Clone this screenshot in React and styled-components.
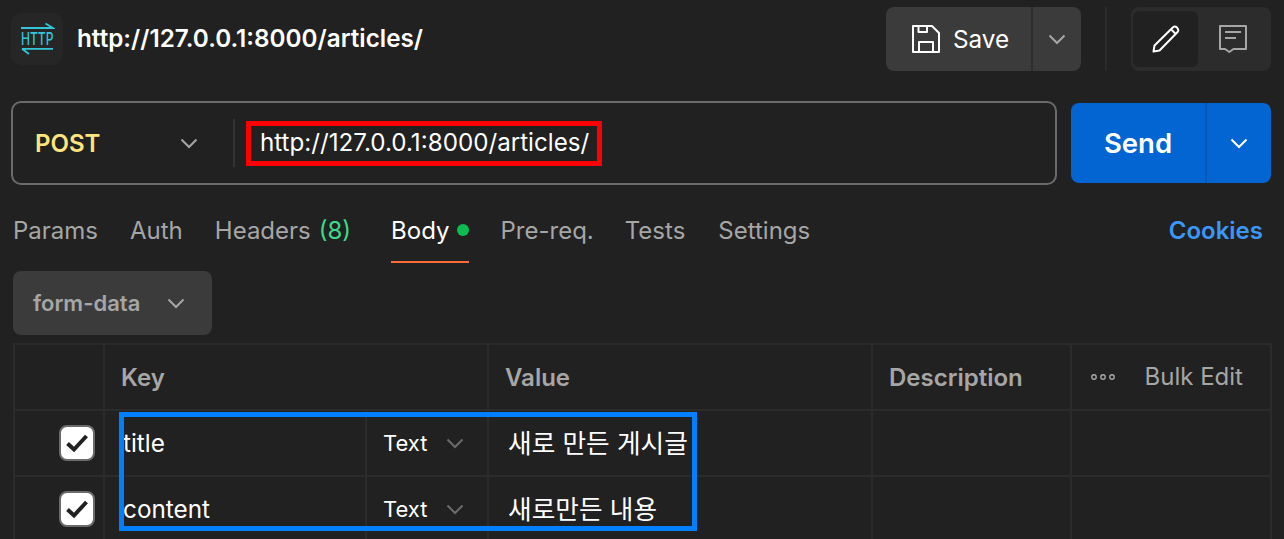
import React from "react";
import styled, { createGlobalStyle } from "styled-components";

const Global = createGlobalStyle`
  html, body { margin: 0; padding: 0; background: #212121; overflow: hidden; }
  body { width: 1284px; height: 539px; font-family: Inter, "Noto Sans CJK KR", sans-serif; color: #fff; }
  * { box-sizing: border-box; }
`;

const Page = styled.div`
  width: 1284px;
  height: 539px;
  overflow: hidden;
  background: #212121;
  padding: 7px 13px 0 11px;
`;

const Header = styled.header`
  display: flex;
  align-items: center;
  height: 64px;
`;

const Logo = styled.div`
  width: 52px;
  height: 52px;
  border-radius: 10px;
  background: #262626;
  display: flex;
  align-items: center;
  justify-content: center;
  margin-right: 14px;
`;

const Title = styled.h1`
  flex: 1;
  margin: 0 0 2px;
  font-size: 24.25px;
  font-weight: 600;
  color: #fff;
`;

const SplitButton = styled.div`
  display: flex;
  height: 64px;
  width: 195px;
  border-radius: 8px;
  overflow: hidden;
  background: #3b3b3b;
`;

const SaveMain = styled.div`
  width: 145px;
  display: flex;
  align-items: center;
  justify-content: center;
  gap: 13px;
  padding: 0 0 1px 4px;
  font-size: 24.3px;
  color: #fff;
`;

const SplitDivider = styled.div`
  width: 2px;
  background: ${(p) => p.$color};
`;

const CaretCell = styled.div`
  flex: 1;
  display: flex;
  align-items: center;
  justify-content: center;
`;

const HeaderDivider = styled.div`
  width: 2px;
  height: 64px;
  background: #2b2b2b;
  margin: 0 24px;
`;

const Toggle = styled.div`
  width: 140px;
  height: 64px;
  border-radius: 8px;
  background: #2c2c2c;
  display: flex;
  align-items: center;
  padding: 4px 2px;
`;

const ToggleItem = styled.div`
  width: ${(p) => (p.$active ? "65px" : "70px")};
  height: 56px;
  border-radius: 6px;
  display: flex;
  align-items: center;
  justify-content: center;
  background: ${(p) => (p.$active ? "#212121" : "transparent")};
`;

const RequestRow = styled.div`
  display: flex;
  align-items: center;
  gap: 14px;
  margin-top: 30px;
`;

const UrlBox = styled.div`
  width: 1046px;
  height: 84px;
  border: 2px solid #6b6b6b;
  border-radius: 10px;
  display: flex;
  align-items: center;
`;

const Method = styled.div`
  width: 220px;
  display: flex;
  align-items: center;
  justify-content: space-between;
  padding: 0 34px 0 22px;
  font-size: 24px;
  font-weight: 600;
  color: #ffe47e;
`;

const MethodDivider = styled.div`
  width: 2px;
  height: 48px;
  background: #333;
`;

const UrlHighlight = styled.div`
  margin-left: 11px;
  width: 356px;
  height: 45px;
  border: 5px solid #ff0000;
  display: flex;
  align-items: center;
  padding: 0 0 2px 9px;
  font-size: 24.2px;
  color: #fff;
`;

const SendButton = styled.div`
  width: 200px;
  height: 80px;
  border-radius: 8px;
  background: #0265d2;
  display: flex;
  overflow: hidden;
`;

const SendMain = styled.div`
  width: 134px;
  display: flex;
  align-items: center;
  justify-content: center;
  font-size: 27.5px;
  font-weight: 600;
  color: #fff;
`;

const Tabs = styled.nav`
  display: flex;
  height: 78px;
  margin-left: 2px;
  padding-right: 8px;
`;

const Tab = styled.div`
  height: 78px;
  margin-right: ${(p) => p.$gap}px;
  padding-top: 14px;
  display: flex;
  align-items: center;
  gap: ${(p) => (p.$active ? 7 : 8)}px;
  font-size: 24px;
  color: ${(p) => (p.$active ? "#fff" : "#a6a6a6")};
  border-bottom: 2px solid ${(p) => (p.$active ? "#ff6c37" : "transparent")};
`;

const Count = styled.span`
  color: #3fd98a;
`;

const Dot = styled.span`
  width: 12px;
  height: 12px;
  border-radius: 50%;
  background: #0cbb52;
`;

const Cookies = styled.div`
  margin-left: auto;
  padding-top: 14px;
  height: 76px;
  display: flex;
  align-items: center;
  font-size: 24px;
  font-weight: 600;
  color: #3b97f5;
`;

const FormSelect = styled.div`
  margin: 8px 0 0 2px;
  width: 199px;
  height: 64px;
  border-radius: 8px;
  background: #3b3b3b;
  display: flex;
  align-items: center;
  gap: 26px;
  padding-left: 20px;
  font-size: 22px;
  font-weight: 600;
  color: #a6a6a6;
`;

const Table = styled.div`
  position: relative;
  margin: 8px 0 0 2px;
  width: 1259px;
  border-left: 2px solid #2b2b2b;
  border-top: 2px solid #2b2b2b;
  display: grid;
  grid-template-columns: 90px 262px 122px 384px 199px 200px;
  grid-auto-rows: 66px;
`;

const Cell = styled.div`
  grid-column: span ${(p) => p.$span || 1};
  border-right: 2px solid #2b2b2b;
  border-bottom: 2px solid #2b2b2b;
  display: flex;
  align-items: center;
  justify-content: ${(p) => (p.$center ? "flex-end" : "flex-start")};
  padding-left: ${(p) => p.$pl ?? 16}px;
  padding-right: ${(p) => p.$pr ?? 0}px;
  font-size: 24px;
  color: #fff;
`;

const HeadLabel = styled.span`
  font-weight: 600;
  color: #a6a6a6;
`;

const BulkEdit = styled.span`
  color: #a6a6a6;
  margin: 0 0 2px 28.5px;
`;

const Check = styled.div`
  width: 36px;
  height: 36px;
  border: 2px solid #6b6b6b;
  border-radius: 8px;
  background: #fff;
  display: flex;
  align-items: center;
  justify-content: center;
`;

const KeyText = styled.span`
  font-size: 24.3px;
  margin-bottom: 1px;
`;

const ValueText = styled.span`
  font-size: 25.7px;
  margin-bottom: 4px;
`;

const TypeCell = styled.div`
  display: flex;
  align-items: center;
  justify-content: space-between;
  width: 82px;
  font-size: 22px;
`;

const Annotation = styled.div`
  position: absolute;
  left: 104px;
  top: 67px;
  width: 578px;
  height: 119px;
  border: 5px solid #0080ff;
  pointer-events: none;
`;

const Caret = ({ color = "#a6a6a6", size = 20 }) => (
  <svg width={size} height={size} viewBox="0 0 20 20" fill="none">
    <path d="M2.5 6.5 L10 14 L17.5 6.5" stroke={color} strokeWidth="2" />
  </svg>
);

const HttpIcon = () => (
  <svg width="36" height="34" viewBox="-1 0 36 34" fill="none">
    <path d="M1 6 H33 L25.5 1.5 M2 26.8 H33 M2 26.8 L9 32" stroke="#35c5d8" strokeWidth="1.8" />
    <text transform="translate(1 22.8) scale(0.71 1)" fontFamily="Inter, sans-serif" fontSize="17" fontWeight="500" fill="#35c5d8">HTTP</text>
  </svg>
);

const SaveIcon = () => (
  <svg width="28" height="28" viewBox="0 0 28 28" fill="none" stroke="#fff" strokeWidth="2" strokeLinejoin="round">
    <path d="M1 1 H20 L27 8 V27 H1 Z" />
    <path d="M6.5 1 V7 H15 V1" />
    <path d="M7 27 V17 H21 V27" />
  </svg>
);

const PencilIcon = () => (
  <svg width="28" height="28" viewBox="0 0 28 28" fill="none" stroke="#fff" strokeWidth="2" strokeLinejoin="round">
    <path d="M1.5 26.5 L2.5 20.5 L21 2.2 Q23 0.8 25 2.6 Q27.2 5 25.6 7 L7.5 25.5 Z" />
    <path d="M19 4.2 L24 9.2" />
  </svg>
);

const CommentIcon = () => (
  <svg width="28" height="28" viewBox="0 0 28 28" fill="none" stroke="#a6a6a6" strokeWidth="2" strokeLinejoin="round">
    <path d="M1 1 H27 V24 H14.5 L10.3 27 L6 24 H1 Z" />
    <path d="M6 7 H22 M6 13 H17" />
  </svg>
);

const CheckMark = () => (
  <svg width="24" height="20" viewBox="0 0 24 20" fill="none">
    <path d="M2.5 10.5 L9 16.5 L21.5 3" stroke="#212121" strokeWidth="4" />
  </svg>
);

const Dots = () => (
  <svg width="26" height="8" viewBox="0 0 26 8" fill="none" stroke="#a6a6a6" strokeWidth="1.4">
    <circle cx="4" cy="4" r="2.2" />
    <circle cx="13" cy="4" r="2.2" />
    <circle cx="22" cy="4" r="2.2" />
  </svg>
);

const rows = [
  { key: "title", value: "새로 만든 게시글" },
  { key: "content", value: "새로만든 내용" },
];

const tabs = [
  { label: "Params", gap: 32 },
  { label: "Auth", gap: 32 },
  { label: "Headers", count: "(8)", gap: 40 },
  { label: "Body", active: true, dot: true, gap: 32 },
  { label: "Pre-req.", gap: 31 },
  { label: "Tests", gap: 33 },
  { label: "Settings", gap: 0 },
];

export default function App() {
  return (
    <Page>
      <Global />
      <Header>
        <Logo><HttpIcon /></Logo>
        <Title>http://127.0.0.1:8000/articles/</Title>
        <SplitButton>
          <SaveMain><SaveIcon />Save</SaveMain>
          <SplitDivider $color="#2e2e2e" />
          <CaretCell><Caret /></CaretCell>
        </SplitButton>
        <HeaderDivider />
        <Toggle>
          <ToggleItem $active><PencilIcon /></ToggleItem>
          <ToggleItem><CommentIcon /></ToggleItem>
        </Toggle>
      </Header>

      <RequestRow>
        <UrlBox>
          <Method>POST<Caret /></Method>
          <MethodDivider />
          <UrlHighlight>http://127.0.0.1:8000/articles/</UrlHighlight>
        </UrlBox>
        <SendButton>
          <SendMain>Send</SendMain>
          <SplitDivider $color="#0357b3" />
          <CaretCell><Caret color="#fff" /></CaretCell>
        </SendButton>
      </RequestRow>

      <Tabs>
        {tabs.map((t) => (
          <Tab key={t.label} $active={t.active} $gap={t.gap}>
            {t.label}
            {t.count && <Count>{t.count}</Count>}
            {t.dot && <Dot />}
          </Tab>
        ))}
        <Cookies>Cookies</Cookies>
      </Tabs>

      <FormSelect>form-data<Caret /></FormSelect>

      <Table>
        <Cell />
        <Cell $span={2}><HeadLabel>Key</HeadLabel></Cell>
        <Cell><HeadLabel>Value</HeadLabel></Cell>
        <Cell><HeadLabel>Description</HeadLabel></Cell>
        <Cell $pl={18}><Dots /><BulkEdit>Bulk Edit</BulkEdit></Cell>
        {rows.map((r) => (
          <React.Fragment key={r.key}>
            <Cell $center $pr={8}><Check><CheckMark /></Check></Cell>
            <Cell $pl={18}><KeyText>{r.key}</KeyText></Cell>
            <Cell><TypeCell>Text<Caret color="#6b6b6b" /></TypeCell></Cell>
            <Cell $pl={19}><ValueText>{r.value}</ValueText></Cell>
            <Cell />
            <Cell />
          </React.Fragment>
        ))}
        <Annotation />
      </Table>
    </Page>
  );
}
